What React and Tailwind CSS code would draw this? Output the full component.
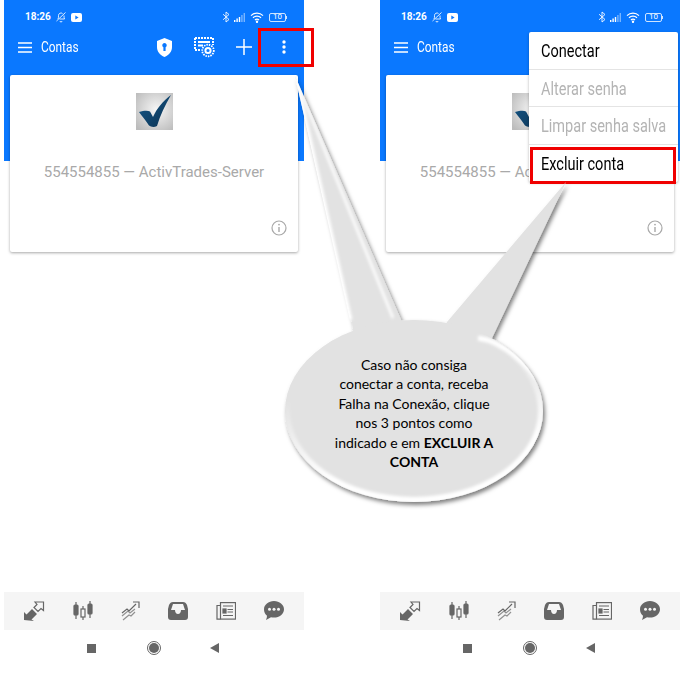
import React from 'react';

const roboto = { fontFamily: 'Roboto, sans-serif' };

const StatusBar = () => (
  <div className="h-[33px] pb-[0px] pt-[1px] pl-[21px] pr-[17px] flex items-center justify-between text-white">
    <div className="flex items-center gap-[4px]">
      <span className="text-[10px] font-bold leading-none font-['Roboto',sans-serif]">18:26</span>
      <svg width="12" height="12" viewBox="0 0 24 24" fill="none" stroke="#fff" strokeOpacity="0.85" strokeWidth="2">
        <path d="M6 16c1-2 1-4 1-7a5 5 0 0 1 8-4M18 9c0 3 0 5 1 7H9M3 20 21 3M10 20a2 2 0 0 0 4 0" />
      </svg>
      <svg width="11" height="9" viewBox="0 0 11 9">
        <rect width="11" height="9" rx="2" fill="#fff" />
        <path d="M4.3 2.4 7.6 4.5 4.3 6.6z" fill="#0a78ff" />
      </svg>
    </div>
    <div className="flex items-center gap-[3px]">
      <svg width="8" height="12" viewBox="0 0 8 12" fill="none" stroke="#fff" strokeOpacity="0.85" strokeWidth="1">
        <path d="M1 3.2 7 8.5 4 11V1l3 2.5L1 8.8" />
      </svg>
      <svg width="11" height="9" viewBox="0 0 11 9" className="ml-[1px]">
        <rect x="0" y="7" width="1.4" height="2" fill="#fff" />
        <rect x="2.4" y="5.5" width="1.4" height="3.5" fill="#fff" />
        <rect x="4.8" y="4" width="1.4" height="5" fill="#fff" />
        <rect x="7.2" y="2" width="1.4" height="7" fill="#fff" fillOpacity="0.45" />
        <rect x="9.6" y="0" width="1.4" height="9" fill="#fff" fillOpacity="0.45" />
      </svg>
      <svg width="14" height="11" viewBox="0 0 14 11" fill="none" stroke="#fff" strokeWidth="1.2" className="ml-[2px]">
        <path d="M1 3.6a8.6 8.6 0 0 1 12 0M3 5.8a5.7 5.7 0 0 1 8 0M5 8a2.8 2.8 0 0 1 4 0" />
        <circle cx="7" cy="9.8" r="0.6" fill="#fff" />
      </svg>
      <div className="ml-[2px] w-[17px] h-[9px] border border-white/80 rounded-[2px] flex items-center justify-center text-[8px] leading-none font-['Roboto',sans-serif]">10</div>
      <div className="w-[1px] h-[3px] bg-white/80 -ml-[3px]" />
    </div>
  </div>
);

const ToolbarIcons = () => (
  <>
    <svg width="17" height="19" viewBox="0 0 17 19" className="absolute left-[152px] top-[5px]">
      <path fillRule="evenodd" fill="#fff" d="M8.5 0 16 3v6c0 4.6-3 8.2-7.500 10C4 17.200 1 13.600 1 9V3zM8.500 5a2.300 2.300 0 0 0-1.100 4.300V13h2.200V9.300A2.300 2.300 0 0 0 8.500 5z" />
    </svg>
    <svg width="22" height="21" viewBox="0 0 22 21" fill="none" stroke="#fff" className="absolute left-[190px] top-[4px]">
      <path d="M1 1h18v7M1 1v12h6" strokeWidth="2" strokeDasharray="2 1" />
      <path d="M4 5h12M4 8.500h5" strokeWidth="1.800" />
      <circle cx="14" cy="13.500" r="5.800" strokeWidth="1.800" strokeDasharray="1.500 1" />
      <circle cx="14" cy="13.500" r="2.600" strokeWidth="2" />
    </svg>
    <svg width="16" height="16" viewBox="0 0 16 16" stroke="#fff" strokeWidth="1.500" className="absolute left-[232px] top-[6px]">
      <path d="M8 0v16M0 8h16" />
    </svg>
    <svg width="4" height="14" viewBox="0 0 4 14" fill="#fff" className="absolute left-[278px] top-[7px]">
      <circle cx="2" cy="2" r="1.700" />
      <circle cx="2" cy="7" r="1.700" />
      <circle cx="2" cy="12" r="1.700" />
    </svg>
  </>
);

const Logo = () => (
  <svg width="37" height="37" viewBox="0 0 37 37">
    <defs>
      <radialGradient id="logoBg" cx="0.55" cy="0.45" r="0.7">
        <stop offset="0" stopColor="#f6f6f6" />
        <stop offset="1" stopColor="#bcbcbc" />
      </radialGradient>
      <linearGradient id="logoCheck" x1="0" y1="0" x2="1" y2="1">
        <stop offset="0" stopColor="#14598c" />
        <stop offset="1" stopColor="#0c3150" />
      </linearGradient>
    </defs>
    <rect width="37" height="37" fill="url(#logoBg)" />
    <path fill="url(#logoCheck)" d="M3 19c5-1.500 9-1.500 11-.5l3 5.500C21 15 27 8 35 2 29 12 24 23 21 33c-3 1.500-6 1-8-.5C10 28 6 23 3 19z" />
  </svg>
);

const AccountCard = () => (
  <div className="relative mx-[6px] h-[177px] bg-white rounded-[2px] shadow-[0_1px_3px_rgba(0,0,0,0.35)] flex flex-col items-center">
    <div className="mt-[18px]"><Logo /></div>
    <div className="mt-[33px] text-[15px] leading-[18px] text-[#a9a9a9] font-['Roboto',sans-serif]">
      554554855 — ActivTrades-Server
    </div>
    <svg width="16" height="16" viewBox="0 0 16 16" fill="none" className="absolute right-[11px] bottom-[16px]">
      <circle cx="8" cy="8" r="7" stroke="#a8a8a8" strokeWidth="1.200" />
      <path d="M8 7v5" stroke="#a8a8a8" strokeWidth="1.400" />
      <circle cx="8" cy="4.600" r="0.900" fill="#a8a8a8" />
    </svg>
  </div>
);

const tabIcons = [
  <svg key="trade" width="22" height="20" viewBox="0 0 22 20">
    <path fill="#666" d="M1 19v-8l2.500 2.500L9 8l5 5-5.500 5.500L11 20z" />
    <path fill="none" stroke="#666" strokeWidth="1.200" d="M11 6.500 14 3.500 12 1h8.500v8.500L18 7.500l-3 3z" />
  </svg>,
  <svg key="candles" width="20" height="20" viewBox="0 0 20 20" fill="#666" stroke="#666" strokeWidth="1.200">
    <path d="M3 1v17M10 5v14M17 0v17" fill="none" />
    <rect x="1" y="4" width="4" height="10" rx="1" />
    <rect x="8" y="8" width="4" height="8" fill="#f5f5f5" />
    <rect x="15" y="3" width="4" height="10" rx="1" />
  </svg>,
  <svg key="chart" width="20" height="20" viewBox="0 0 20 20" fill="none" stroke="#666" strokeWidth="1.200">
    <path d="M1 12l5-4 2 2 7-7M12 1h6v6" />
    <path d="M1 15l6-5 2 2 5-4M2 19l6-5 2 1 4-4" strokeOpacity="0.7" />
  </svg>,
  <svg key="inbox" width="20" height="18" viewBox="0 0 20 18">
    <path fill="#666" fillRule="evenodd" d="M5 0h10c2 0 3 1 4 3l1 4v8c0 2-1 3-3 3H3c-2 0-3-1-3-3V7l1-4c1-2 2-3 4-3zM5 2 3 8h4c0 2 1 4 3 4s3-2 3-4h4l-2-6z" />
  </svg>,
  <svg key="news" width="20" height="18" viewBox="0 0 20 18" fill="none" stroke="#666" strokeWidth="1.200">
    <rect x="4.500" y="0.600" width="15" height="16.500" />
    <path d="M4.500 3.500H1v13.600h3.500M7 4h10M11.500 7.500H17M11.500 10H17M7 13.500h10" />
    <rect x="7" y="7" width="3" height="4" fill="#666" />
  </svg>,
  <svg key="chat" width="20" height="20" viewBox="0 0 20 20">
    <path fill="#666" d="M10 0c5.500 0 10 3.700 10 8.300s-4.500 8.300-10 8.300c-1 0-2-.1-3-.4L2 19c.7-1.400 1-2.800 1-4.200C1.100 13.300 0 11 0 8.300 0 3.700 4.500 0 10 0z" />
    <circle cx="5.500" cy="8.300" r="1.500" fill="#f5f5f5" />
    <circle cx="10" cy="8.300" r="1.500" fill="#f5f5f5" />
    <circle cx="14.500" cy="8.300" r="1.500" fill="#f5f5f5" />
  </svg>,
];

const MenuRow = ({ label, disabled }) => (
  <div className="h-[37.500px] flex items-center pl-[12px] pt-[3px] border-b border-[#e4e4e4] last:border-b-0">
    <span className={`text-[17.500px] leading-none origin-left scale-x-[0.83] whitespace-nowrap font-['Roboto',sans-serif] ${disabled ? 'text-[#b4b4b4]' : 'text-black'}`}>
      {label}
    </span>
  </div>
);

const Phone = ({ menu }) => (
  <div className="relative w-[300px] h-[673px] flex flex-col">
    <div className="h-[161px] bg-[#0a78ff]">
      <StatusBar />
      <div className="relative h-[28px] flex items-center pl-[14px] text-white">
        <svg width="14" height="11" viewBox="0 0 14 11" stroke="#fff" strokeWidth="1.300">
          <path d="M0 1h14M0 5.500h14M0 10h14" />
        </svg>
        <span className="ml-[9px] text-[14px] leading-none origin-left scale-x-[0.85] font-['Roboto',sans-serif]">Contas</span>
        {!menu && <ToolbarIcons />}
      </div>
      <div className="mt-[14px]"><AccountCard /></div>
    </div>
    <div className="mt-auto mb-[16px]">
      <div className="h-[38px] bg-[#f5f5f5] flex items-center justify-between pl-[19px] pr-[20px]">
        {tabIcons}
      </div>
      <div className="mt-[9px] pl-[83px] flex items-center h-[18px]">
        <div className="w-[9px] h-[9px] bg-[#666]" />
        <div className="ml-[51px] w-[14px] h-[14px] rounded-full border border-[#666] flex items-center justify-center">
          <div className="w-[10px] h-[10px] rounded-full bg-[#666]" />
        </div>
        <div className="ml-[49px] w-0 h-0 border-y-[5px] border-y-transparent border-r-[9px] border-r-[#666]" />
      </div>
    </div>
    {menu && (
      <div className="absolute top-[32px] right-[2px] w-[149px] bg-white rounded-[2px] shadow-[0_1px_3px_rgba(0,0,0,0.3)]">
        <MenuRow label="Conectar" />
        <MenuRow label="Alterar senha" disabled />
        <MenuRow label="Limpar senha salva" disabled />
        <MenuRow label="Excluir conta" />
      </div>
    )}
  </div>
);

const Callout = () => (
  <svg width="680" height="673" viewBox="0 0 680 673" className="absolute left-0 top-0 pointer-events-none">
    <defs>
      <filter id="shade" x="-20%" y="-20%" width="140%" height="140%">
        <feDropShadow dx="2" dy="3" stdDeviation="2" floodColor="#000" floodOpacity="0.5" />
      </filter>
      <filter id="soft"><feGaussianBlur stdDeviation="1.600" /></filter>
      <clipPath id="bubble"><ellipse cx="414" cy="411" rx="129" ry="91" /></clipPath>
      <clipPath id="tailA"><path d="M295 76 402 320 352 330z" /></clipPath>
      <linearGradient id="rim" x1="0.2" y1="0" x2="0.5" y2="1">
        <stop offset="0.35" stopColor="#fff" stopOpacity="0" />
        <stop offset="0.8" stopColor="#fff" />
      </linearGradient>
    </defs>
    <g filter="url(#shade)" fill="#e2e2e2">
      <path d="M295 76 402 322V350H356L352 322z" />
      <path d="M566 182 492 338 486 365H450L447 322z" />
      <ellipse cx="414" cy="411" rx="129" ry="91" />
    </g>
    <g clipPath="url(#tailA)">
      <path d="M297 82 393 318" stroke="#fff" strokeWidth="2.500" filter="url(#soft)" />
      <path d="M295 76 350 320" stroke="#fff" strokeWidth="5" filter="url(#soft)" />
    </g>
    <g clipPath="url(#bubble)" fill="none">
      <ellipse cx="414" cy="411" rx="127" ry="89" stroke="url(#rim)" strokeWidth="6" filter="url(#soft)" />
      <path d="M478 338q30 4 62 44" stroke="#fff" strokeWidth="5" filter="url(#soft)" />
    </g>
  </svg>
);

export default function App() {
  return (
    <div className="relative w-[680px] h-[673px] bg-white overflow-hidden" style={roboto}>
      <div className="flex gap-[76px] pl-[4px]">
        <Phone />
        <Phone menu />
      </div>
      <div className="absolute left-[258px] top-[28px] w-[56px] h-[39px] border-[3px] border-[#f00000]" />
      <div className="absolute left-[530px] top-[147px] w-[146px] h-[37px] border-[3px] border-[#f00000]" />
      <Callout />
      <div className="absolute left-[324px] top-[355px] w-[180px] text-center text-[14px] leading-[19.400px] text-black font-['Lato',sans-serif]">
        Caso não consiga<br />
        conectar a conta, receba<br />
        Falha na Conexão, clique<br />
        nos 3 pontos como<br />
        indicado e em <b>EXCLUIR A</b><br />
        <b>CONTA</b>
      </div>
    </div>
  );
}
